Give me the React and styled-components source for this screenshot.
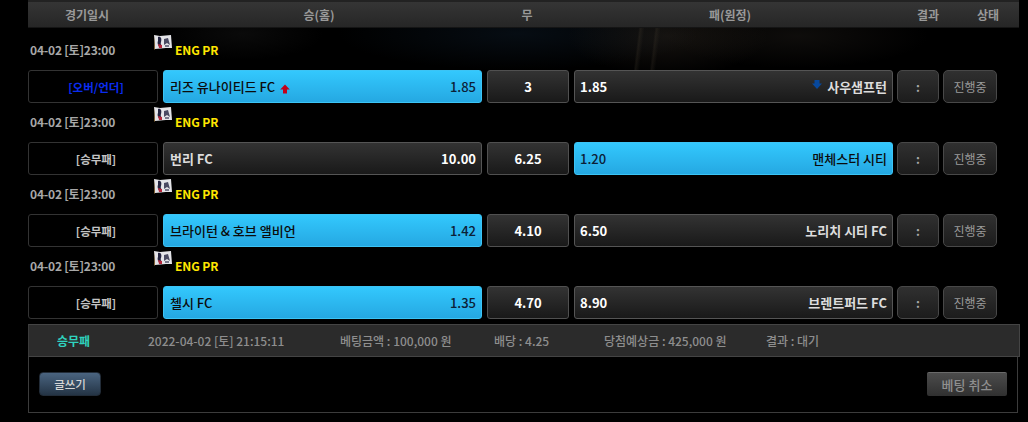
import React from "react";
import styled, { createGlobalStyle, css } from "styled-components";

const Global = createGlobalStyle`
  html, body { margin: 0; padding: 0; background: #000; }
  body { font-family: "Noto Sans CJK KR", "Noto Sans", sans-serif; font-size: 12px; overflow: hidden; }
`;

const Page = styled.div`
  width: 992px;
  margin-left: 28px;
  height: 422px;
`;

const Header = styled.div`
  width: 991px;
  height: 25px;
  border-top: 2px solid #222;
  border-bottom: 1px solid #151515;
  background: linear-gradient(#353535, #262626);
  display: grid;
  grid-template-columns: 118px 346px 70px 336px 60px 60px;
  align-items: center;
  color: #999;
  font-size: 12px;
  font-weight: 700;
`;

const HeadCell = styled.div`
  text-align: center;
  line-height: 24px;
`;

const Board = styled.div`
  background:
    linear-gradient(97deg, transparent 606px, rgba(80, 70, 55, 0.22) 608px, transparent 612px, transparent 622px, rgba(80, 70, 55, 0.2) 624px, transparent 628px),
    radial-gradient(ellipse 100px 40px at 640px 8px, rgba(70, 60, 50, 0.3), transparent),
    radial-gradient(ellipse 180px 36px at 490px 6px, rgba(20, 40, 60, 0.32), transparent),
    radial-gradient(ellipse 130px 32px at 770px 8px, rgba(45, 40, 35, 0.32), transparent),
    radial-gradient(ellipse 80px 26px at 215px 6px, rgba(40, 40, 40, 0.25), transparent),
    linear-gradient(#000, #000);
  background-size: 100% 42px;
  background-repeat: no-repeat;
`;

const Match = styled.div``;

const DateRow = styled.div`
  height: ${(p) => (p.$first ? 42 : 39)}px;
  display: flex;
  align-items: flex-start;
`;

const DateText = styled.div`
  width: 124px;
  margin-left: 2px;
  padding-top: ${(p) => (p.$first ? "13px" : "10px")};
  line-height: 18px;
  color: #a8a8a8;
  font-weight: 700;
  font-size: 12px;
  letter-spacing: -0.2px;
  white-space: nowrap;
`;

const League = styled.div`
  display: flex;
  align-items: flex-start;
  padding-top: ${(p) => (p.$first ? "6px" : "3px")};
`;

const Flag = styled.svg`
  width: 18px;
  height: 17px;
  flex: none;
`;

const LeagueName = styled.span`
  margin-left: 3px;
  margin-top: 7px;
  line-height: 18px;
  color: #ffe600;
  font-size: 12px;
  font-weight: 700;
  letter-spacing: -0.1px;
`;

const Row = styled.div`
  display: flex;
  height: 33px;
`;

const TypeBox = styled.div`
  width: 130px;
  box-sizing: border-box;
  border: 1px solid #333;
  border-radius: 3px;
  background: #000;
  color: ${(p) => (p.$blue ? "#0a2cf0" : "#c4c4c4")};
  font-size: 11.5px;
  font-weight: 700;
  padding-left: 6px;
  display: flex;
  align-items: center;
  justify-content: center;
  margin-right: 5px;
`;

const darkFace = css`
  background: linear-gradient(#333, #191919);
  border: 1px solid #555;
  color: #fff;
`;

const blueFace = css`
  background: linear-gradient(#33c8fd, #25a8e2);
  border: 1px solid #3cc4f5;
  color: #0b0b0b;
`;

const Odds = styled.div`
  width: 319px;
  margin-right: ${(p) => p.$mr}px;
  box-sizing: border-box;
  border-radius: 3px;
  display: flex;
  align-items: center;
  justify-content: space-between;
  padding: 0 5px 0 ${(p) => p.$pl}px;
  font-size: 13px;
  font-weight: ${(p) => (p.$on ? 500 : 700)};
  ${(p) => (p.$on ? blueFace : darkFace)}
`;

const Name = styled.span`
  display: inline-flex;
  align-items: center;
  gap: 5px;
  font-size: 13px;
  color: ${(p) => (p.$on ? "#0b0b0b" : "#ddd")};
  white-space: nowrap;
`;

const Price = styled.span`
  color: ${(p) => (p.$on ? "#0c2036" : "#fff")};
`;

const DrawCell = styled.div`
  width: 82px;
  margin-right: 5px;
  box-sizing: border-box;
  border-radius: 3px;
  display: flex;
  align-items: center;
  justify-content: center;
  font-size: 13px;
  font-weight: 700;
  ${darkFace}
  border-color: #505050;
`;

const ScoreCell = styled.div`
  width: 42px;
  margin-left: 4px;
  box-sizing: border-box;
  border: 1px solid #484848;
  border-radius: 5px;
  background: linear-gradient(#303030, #1c1c1c);
  color: #aaa;
  font-weight: 700;
  display: flex;
  align-items: center;
  justify-content: center;
`;

const StatusCell = styled.div`
  width: 54px;
  margin-left: 4px;
  box-sizing: border-box;
  border: 1px solid #484848;
  border-radius: 5px;
  background: linear-gradient(#303030, #1c1c1c);
  color: #9a9a9a;
  font-size: 12px;
  display: flex;
  align-items: center;
  justify-content: center;
`;

const Arrow = styled.svg`
  width: ${(p) => p.$w}px;
  height: ${(p) => p.$h}px;
  flex: none;
  margin: ${(p) => p.$m};
`;

const SummaryBar = styled.div`
  margin-top: 5px;
  width: 992px;
  height: 33px;
  box-sizing: border-box;
  border: 1px solid #444;
  border-left-color: #3a3a3a;
  background: #2b2b2b;
  display: grid;
  grid-template-columns: 119px 192px 154px 110px 162px auto;
  align-items: center;
  color: #8e8e8e;
  font-size: 12px;
  font-weight: 500;
  white-space: nowrap;
`;

const BetType = styled.div`
  color: #2fd3bf;
  font-weight: 700;
  text-align: center;
  padding-right: 30px;
`;

const SumCell = styled.div``;

const Footer = styled.div`
  width: 990px;
  height: 56px;
  box-sizing: border-box;
  border: 1px solid #3c3c3c;
  border-top: none;
  display: flex;
  justify-content: space-between;
  align-items: flex-start;
  padding: 15px 0 0 10px;
`;

const WriteBtn = styled.button`
  width: 62px;
  height: 24px;
  border: 1px solid #222c38;
  border-radius: 4px;
  background: linear-gradient(#4a6480, #243445);
  color: #d5d5d5;
  font: 500 11.5px "Noto Sans CJK KR", sans-serif;
  padding: 0;
`;

const CancelBtn = styled.button`
  width: 80px;
  height: 24px;
  margin-right: 10px;
  border: none;
  border-top: 1px solid #6a6a6a;
  background: linear-gradient(#4c4c4c, #303030);
  color: #8f8f8f;
  font: 500 13px "Noto Sans CJK KR", sans-serif;
  padding: 0;
  border-radius: 2px;
`;

const LeagueFlag = () => (
  <Flag viewBox="0 0 18 17">
    <path d="M0 1 L6 2 L17 1 L18 14 L12 14 L1 15 Z" fill="#e4e4e8" />
    <path d="M0 1 L1 15 L0 16 Z" fill="#8a6a3a" />
    <path d="M4 3 C7 2 8 5 7 8 C6 10 8 11 7 13 C4 13 3 9 4 7 Z" fill="#23233f" />
    <path d="M10 5 L14 4 L16 11 L13 9 L10 11 Z" fill="#4a4a62" />
    <path d="M4 10 L8 11 L8 14 L5 14 Z" fill="#b4283c" />
    <path d="M11 11 L15 11 L15 13 L11 13 Z" fill="#77778a" />
  </Flag>
);

const UpArrow = () => (
  <Arrow viewBox="0 0 10 10" $w={10} $h={10} $m="4px 0 0 0">
    <path d="M5 .5 L9.8 5.5 L7 5.5 L7 9.5 L3 9.5 L3 5.5 L.2 5.5 Z" fill="#c4001a" />
  </Arrow>
);

const DownArrow = () => (
  <Arrow viewBox="0 0 10 9" $w={10} $h={9} $m="0 0 5px 0">
    <path d="M2.5 0 L7.5 0 L7.5 3.5 L10 3.5 L5 9 L0 3.5 L2.5 3.5 Z" fill="#07489c" />
  </Arrow>
);

const matches = [
  { type: "[오버/언더]", blue: true, home: "리즈 유나이티드 FC", homeOdd: "1.85", draw: "3", awayOdd: "1.85", away: "사우샘프턴", pick: "home", arrows: true },
  { type: "[승무패]", home: "번리 FC", homeOdd: "10.00", draw: "6.25", awayOdd: "1.20", away: "맨체스터 시티", pick: "away" },
  { type: "[승무패]", home: "브라이턴 & 호브 앨비언", homeOdd: "1.42", draw: "4.10", awayOdd: "6.50", away: "노리치 시티 FC", pick: "home" },
  { type: "[승무패]", home: "첼시 FC", homeOdd: "1.35", draw: "4.70", awayOdd: "8.90", away: "브렌트퍼드 FC", pick: "home" },
];

export default function App() {
  return (
    <Page>
      <Global />
      <Header>
        <HeadCell>경기일시</HeadCell>
        <HeadCell>승(홈)</HeadCell>
        <HeadCell>무</HeadCell>
        <HeadCell>패(원정)</HeadCell>
        <HeadCell>결과</HeadCell>
        <HeadCell>상태</HeadCell>
      </Header>
      <Board>
        {matches.map((m, i) => (
          <Match key={i}>
            <DateRow $first={i === 0}>
              <DateText $first={i === 0}>04-02 [토]23:00</DateText>
              <League $first={i === 0}>
                <LeagueFlag />
                <LeagueName>ENG PR</LeagueName>
              </League>
            </DateRow>
            <Row>
              <TypeBox $blue={m.blue}>{m.type}</TypeBox>
              <Odds $pl={6} $mr={5} $on={m.pick === "home"}>
                <Name $on={m.pick === "home"}>
                  {m.home}
                  {m.arrows && <UpArrow />}
                </Name>
                <Price $on={m.pick === "home"}>{m.homeOdd}</Price>
              </Odds>
              <DrawCell>{m.draw}</DrawCell>
              <Odds $pl={5} $mr={0} $on={m.pick === "away"}>
                <Price $on={m.pick === "away"}>{m.awayOdd}</Price>
                <Name $on={m.pick === "away"}>
                  {m.arrows && <DownArrow />}
                  {m.away}
                </Name>
              </Odds>
              <ScoreCell>:</ScoreCell>
              <StatusCell>진행중</StatusCell>
            </Row>
          </Match>
        ))}
      </Board>
      <SummaryBar>
        <BetType>승무패</BetType>
        <SumCell>2022-04-02 [토] 21:15:11</SumCell>
        <SumCell>베팅금액 : 100,000 원</SumCell>
        <SumCell>배당 : 4.25</SumCell>
        <SumCell>당첨예상금 : 425,000 원</SumCell>
        <SumCell>결과 : 대기</SumCell>
      </SummaryBar>
      <Footer>
        <WriteBtn>글쓰기</WriteBtn>
        <CancelBtn>베팅 취소</CancelBtn>
      </Footer>
    </Page>
  );
}
